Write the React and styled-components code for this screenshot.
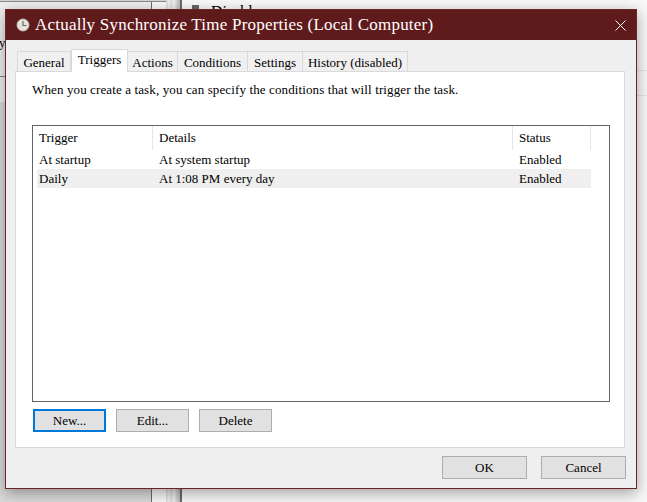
import React from "react";
import styled, { createGlobalStyle } from "styled-components";

const Global = createGlobalStyle`
  html, body {
    margin: 0;
    padding: 0;
    background: #f6f6f6;
  }
  body {
    font-family: "Liberation Serif", serif;
    color: #000;
    overflow: hidden;
  }
`;

const Desktop = styled.div`
  position: relative;
  width: 647px;
  height: 502px;
  overflow: hidden;
  display: flex;
  background: #f8f8f8;
`;

const LeftPane = styled.div`
  width: 152px;
  box-sizing: border-box;
  border-right: 1px solid #6a6a6a;
  display: flex;
  flex-direction: column;
`;

const TopEdge = styled.div`
  height: 1px;
  background: #d4d4d4;
  border-bottom: 1px solid #8a8a8a;
  width: 170px;
`;

const TreeRow = styled.div`
  height: 75px;
  flex: none;
  border-bottom: 1px solid #858585;
  background: #efefef;
  font-size: 13px;
  line-height: 15px;
  padding-top: 33px;
  box-sizing: border-box;
  text-indent: -1px;
`;

const TreeGap = styled.div`
  height: 25px;
  flex: none;
  background: #efefef;
`;

const TreeRest = styled.div`
  flex: 1;
  background: #dadada;
`;

const Gutter = styled.div`
  width: 14px;
`;

const Splitter = styled.div`
  width: 14px;
  border-right: 2px solid #6a6a6a;
  background: linear-gradient(90deg, #d6d6d6 0, #f2f2f2 3px, #d8d8d8 5px, #f2f2f2 8px, #d8d8d8 10px, #b8b8b8 100%);
`;

const RightPane = styled.div`
  flex: 1;
  display: flex;
  flex-direction: column;
`;

const ActionHeader = styled.div`
  height: 71px;
  box-sizing: border-box;
  border-bottom: 1px solid #e6e6e6;
  display: flex;
  gap: 12px;
  padding: 3px 0 0 10px;
`;

const ActionGlyph = styled.div`
  width: 7px;
  height: 6px;
  margin-top: 2px;
  background: #666;
`;

const ActionLabel = styled.div`
  height: 6px;
  overflow: hidden;
  font-size: 16px;
  line-height: 18px;
`;

const ActionRow = styled.div`
  height: 25px;
  box-sizing: border-box;
  border-bottom: 1px solid #e6e6e6;
`;

const Dialog = styled.div`
  position: absolute;
  left: 5px;
  top: 9px;
  width: 632px;
  height: 480px;
  box-sizing: border-box;
  border: 1px solid #6d2426;
  background: #efefef;
  box-shadow: 0 4px 14px rgba(0, 0, 0, 0.36);
  display: flex;
  flex-direction: column;
`;

const TitleBar = styled.div`
  height: 30px;
  flex: none;
  background: #5f1a1c;
  color: #fff;
  display: flex;
  align-items: center;
  padding: 0 10px;
  gap: 5px;
  font-size: 17px;
  letter-spacing: 0.22px;
`;

const TitleText = styled.span`
  flex: 1;
`;

const CloseIcon = styled.svg`
  width: 11px;
  height: 11px;
`;

const Content = styled.div`
  flex: 1;
  padding: 10px 10px 0 9px;
  display: flex;
  flex-direction: column;
`;

const TabStrip = styled.div`
  display: flex;
  height: 22px;
  padding-left: 2px;
  align-items: flex-end;
  position: relative;
  z-index: 1;
  margin-bottom: -1px;
`;

const Tab = styled.div`
  box-sizing: border-box;
  width: ${(p) => p.$w}px;
  height: ${(p) => (p.$active ? 23 : 21)}px;
  border: 1px solid #d9d9d9;
  border-left-width: ${(p) => (p.$active ? 1 : 0)}px;
  border-bottom: ${(p) => (p.$active ? "none" : "1px solid #d9d9d9")};
  background: ${(p) => (p.$active ? "#fff" : "#f0f0f0")};
  font-size: 13px;
  text-align: center;
  line-height: ${(p) => (p.$active ? 20 : 21)}px;
  &:first-child {
    border-left-width: 1px;
  }
`;

const Panel = styled.div`
  width: 610px;
  height: 377px;
  box-sizing: border-box;
  background: #fff;
  border: 1px solid #d9d9d9;
  padding: 10px 13px 0 16px;
`;

const Intro = styled.div`
  font-size: 13px;
  letter-spacing: 0.12px;
  line-height: 15px;
  margin-bottom: 28px;
`;

const Table = styled.div`
  box-sizing: border-box;
  width: 578px;
  height: 277px;
  border: 1px solid #646464;
  padding-left: 4px;
`;

const Row = styled.div`
  display: grid;
  grid-template-columns: 116px 360px 78px;
  width: 554px;
  height: ${(p) => (p.$head ? 24 : 19)}px;
  background: ${(p) => (p.$selected ? "#efefef" : "transparent")};
  font-size: 13px;
  line-height: ${(p) => (p.$head ? 24 : 19)}px;
`;

const Cell = styled.div`
  padding-left: 2px;
  box-sizing: border-box;
  white-space: nowrap;
  border-right: ${(p) => (p.$head ? "1px solid #e5e5e5" : "none")};
  & + & {
    padding-left: 6px;
  }
`;

const ButtonRow = styled.div`
  display: flex;
  gap: 10px;
  margin: 7px 0 0 1px;
`;

const Button = styled.button`
  box-sizing: border-box;
  width: ${(p) => p.$w}px;
  height: 23px;
  padding: 0;
  background: #e1e1e1;
  border: ${(p) => (p.$focus ? "2px solid #0078d7" : "1px solid #adadad")};
  font-family: inherit;
  font-size: 13px;
  color: #000;
`;

const Footer = styled.div`
  display: flex;
  justify-content: flex-end;
  gap: 14px;
  margin-top: 8px;
`;

const triggers = [
  { name: "At startup", details: "At system startup", status: "Enabled" },
  { name: "Daily", details: "At 1:08 PM every day", status: "Enabled", selected: true },
];

const tabs = [
  ["General", 54],
  ["Triggers", 57, true],
  ["Actions", 50],
  ["Conditions", 70],
  ["Settings", 55],
  ["History (disabled)", 105],
];

const ClockIcon = () => (
  <svg width="14" height="14" viewBox="0 0 14 14" style={{ flex: "none" }}>
    <circle cx="7" cy="7" r="6" fill="#e6e3da" stroke="#bdbdbd" />
    <path d="M7 3V7.5H10.5" fill="none" stroke="#6b6257" strokeWidth="1.1" />
  </svg>
);

export default function App() {
  return (
    <Desktop>
      <Global />
      <LeftPane>
        <TopEdge />
        <TreeRow>y</TreeRow>
        <TreeGap />
        <TreeRest />
      </LeftPane>
      <Gutter />
      <Splitter />
      <RightPane>
        <ActionHeader>
          <ActionGlyph />
          <ActionLabel>Disable</ActionLabel>
        </ActionHeader>
        <ActionRow />
      </RightPane>
      <Dialog>
        <TitleBar>
          <ClockIcon />
          <TitleText>Actually Synchronize Time Properties (Local Computer)</TitleText>
          <CloseIcon viewBox="0 0 11 11">
            <path d="M0.5 0.5L10.5 10.5M10.5 0.5L0.5 10.5" stroke="#fff" strokeWidth="1" />
          </CloseIcon>
        </TitleBar>
        <Content>
          <TabStrip>
            {tabs.map(([label, w, active]) => (
              <Tab key={label} $w={w} $active={active}>{label}</Tab>
            ))}
          </TabStrip>
          <Panel>
            <Intro>When you create a task, you can specify the conditions that will trigger the task.</Intro>
            <Table>
              <Row $head>
                <Cell $head>Trigger</Cell>
                <Cell $head>Details</Cell>
                <Cell $head>Status</Cell>
              </Row>
              {triggers.map((t) => (
                <Row key={t.name} $selected={t.selected}>
                  <Cell>{t.name}</Cell>
                  <Cell>{t.details}</Cell>
                  <Cell>{t.status}</Cell>
                </Row>
              ))}
            </Table>
            <ButtonRow>
              <Button $w={73} $focus>New...</Button>
              <Button $w={73}>Edit...</Button>
              <Button $w={73}>Delete</Button>
            </ButtonRow>
          </Panel>
          <Footer>
            <Button $w={85}>OK</Button>
            <Button $w={85}>Cancel</Button>
          </Footer>
        </Content>
      </Dialog>
    </Desktop>
  );
}
